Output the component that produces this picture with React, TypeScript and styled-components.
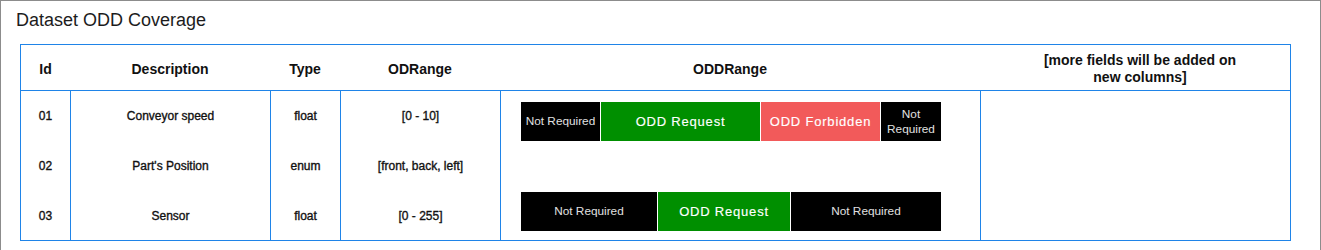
import React from 'react';
import styled, { createGlobalStyle } from 'styled-components';

const GlobalStyle = createGlobalStyle`
  body {
    margin: 0;
    font-family: "Liberation Sans", Arial, sans-serif;
    background: #fff;
  }
`;

const Frame = styled.div`
  box-sizing: border-box;
  width: 1321px;
  min-height: 262px;
  border: 1px solid #8c8c8c;
  padding: 9px 0 0 19px;
`;

const Title = styled.h2`
  margin: 0 0 13px -4px;
  font-size: 18px;
  font-weight: normal;
  color: #1c1c1c;
`;

const Table = styled.div`
  display: grid;
  grid-template-columns: 49px 200px 70px 160px 480px 310px;
  grid-template-rows: 46px 50px 50px 49px;
  width: 1271px;
  box-sizing: border-box;
  border: 1px solid #1f84e8;
`;

const HeadCell = styled.div<{ $shift?: number }>`
  display: flex;
  align-items: center;
  justify-content: center;
  text-align: center;
  box-sizing: border-box;
  border-bottom: 1px solid #1f84e8;
  padding-top: 3px;
  padding-left: ${(p) => (p.$shift && p.$shift > 0 ? p.$shift * 2 : 0)}px;
  padding-right: ${(p) => (p.$shift && p.$shift < 0 ? -p.$shift * 2 : 0)}px;
  font-size: 14px;
  font-weight: bold;
  line-height: 17px;
  color: #111;
`;

const Cell = styled.div<{ $first?: boolean }>`
  display: flex;
  align-items: center;
  justify-content: center;
  border-left: ${(p) => (p.$first ? 'none' : '1px solid #1f84e8')};
  font-size: 12px;
  color: #111;
  -webkit-text-stroke: 0.35px #111;
`;

const RangeCell = styled.div`
  grid-column: 5;
  grid-row: 2 / span 3;
  display: flex;
  flex-direction: column;
  justify-content: space-between;
  border-left: 1px solid #1f84e8;
  padding: 11px 0 9px 20px;
`;

const SpareCell = styled.div`
  grid-column: 6;
  grid-row: 2 / span 3;
  border-left: 1px solid #1f84e8;
`;

const Bar = styled.div`
  display: flex;
  width: 420px;
  height: 39px;
`;

type Kind = 'none' | 'request' | 'forbidden';

const segmentColor: Record<Kind, string> = {
  none: '#000',
  request: '#008f00',
  forbidden: '#f25a5a',
};

const Segment = styled.div<{ $kind: Kind; $width: number }>`
  box-sizing: border-box;
  flex: 0 0 ${(p) => p.$width}px;
  display: flex;
  align-items: center;
  justify-content: center;
  text-align: center;
  padding: 0 4px;
  background: ${(p) => segmentColor[p.$kind]};
  border-right: 1px solid #fff;
  color: ${(p) => (p.$kind === 'none' ? '#e0e0e0' : '#fff')};
  font-size: ${(p) => (p.$kind === 'none' ? '11.8px' : '13px')};
  letter-spacing: ${(p) => (p.$kind === 'none' ? '0' : '0.8px')};
  line-height: 15px;
  -webkit-text-stroke: ${(p) => (p.$kind === 'none' ? '0' : '0.15px #fff')};

  &:last-child {
    border-right: none;
  }
`;

const labels: Record<Kind, string> = {
  none: 'Not Required',
  request: 'ODD Request',
  forbidden: 'ODD Forbidden',
};

const fields = [
  { id: '01', description: 'Conveyor speed', type: 'float', range: '[0 - 10]' },
  { id: '02', description: "Part's Position", type: 'enum', range: '[front, back, left]' },
  { id: '03', description: 'Sensor', type: 'float', range: '[0 - 255]' },
];

const bars: { kind: Kind; width: number }[][] = [
  [
    { kind: 'none', width: 80 },
    { kind: 'request', width: 160 },
    { kind: 'forbidden', width: 120 },
    { kind: 'none', width: 60 },
  ],
  [
    { kind: 'none', width: 137 },
    { kind: 'request', width: 133 },
    { kind: 'none', width: 150 },
  ],
];

const App = () => {
  return (
    <>
      <GlobalStyle />
      <Frame>
        <Title>Dataset ODD Coverage</Title>
        <Table>
          <HeadCell>Id</HeadCell>
          <HeadCell>Description</HeadCell>
          <HeadCell>Type</HeadCell>
          <HeadCell>ODRange</HeadCell>
          <HeadCell $shift={-10}>ODDRange</HeadCell>
          <HeadCell $shift={5}>
            [more fields will be added on
            <br />
            new columns]
          </HeadCell>

          {fields.map((field) => (
            <React.Fragment key={field.id}>
              <Cell $first style={{ gridColumn: 1 }}>{field.id}</Cell>
              <Cell>{field.description}</Cell>
              <Cell>{field.type}</Cell>
              <Cell>{field.range}</Cell>
            </React.Fragment>
          ))}

          <RangeCell>
            {bars.map((segments, i) => (
              <Bar key={i}>
                {segments.map((s, j) => (
                  <Segment key={j} $kind={s.kind} $width={s.width}>
                    {labels[s.kind]}
                  </Segment>
                ))}
              </Bar>
            ))}
          </RangeCell>
          <SpareCell />
        </Table>
      </Frame>
    </>
  );
};

export default App;
